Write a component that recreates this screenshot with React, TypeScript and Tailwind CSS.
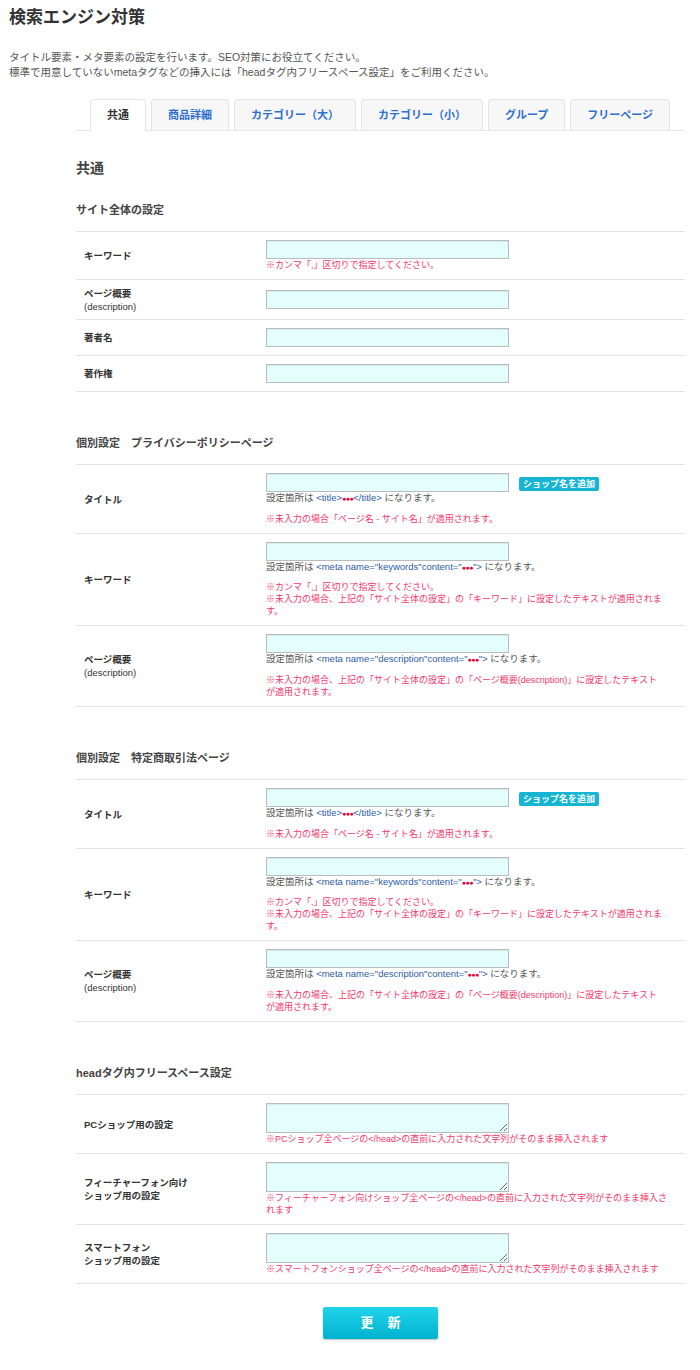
import React from "react";

const tabs = ["共通", "商品詳細", "カテゴリー（大）", "カテゴリー（小）", "グループ", "フリーページ"];

function Input() {
  return (
    <input
      type="text"
      className="block w-[243px] h-[19px] bg-[#e4fdfd] border border-[#b9bcbc] shadow-[inset_0_1px_1px_rgba(0,0,0,0.08)]"
    />
  );
}

function Area() {
  return (
    <textarea className="block w-[243px] h-[30px] bg-[#e4fdfd] border border-[#b9bcbc] shadow-[inset_0_1px_1px_rgba(0,0,0,0.08)]" />
  );
}

function Note({ children }: { children: React.ReactNode }) {
  return <p className="text-[9px] leading-[12px] text-[#f2386b]">{children}</p>;
}

function Code({ children }: { children: React.ReactNode }) {
  return <span className="text-[#2d5ca8]">{children}</span>;
}

function Dots() {
  return <span className="text-[#e8003a] text-[7px] tracking-[-0.5px]">●●●</span>;
}

function Place({ children }: { children: React.ReactNode }) {
  return (
    <p className="text-[9.5px] leading-[12px] text-[#555]">
      設定箇所は {children} になります。
    </p>
  );
}

function Row({ label, sub, children }: { label: React.ReactNode; sub?: string; children: React.ReactNode }) {
  return (
    <div className="flex border-b border-[#e3e3e3]">
      <div className="w-[190px] shrink-0 pl-[8px] flex flex-col justify-center text-[9.5px] leading-[13px] text-[#333]">
        <span className="font-bold">{label}</span>
        {sub && <span>{sub}</span>}
      </div>
      <div className="flex-1 py-[8px] pr-[4px]">{children}</div>
    </div>
  );
}

function Heading({ children, first }: { children: React.ReactNode; first?: boolean }) {
  return (
    <h3
      className={`${first ? "mt-[24px]" : "mt-[43px]"} mb-[13px] text-[11px] leading-[16px] font-bold text-[#444]`}
    >
      {children}
    </h3>
  );
}

function PageSection({ title }: { title: string }) {
  return (
    <>
      <Heading>{title}</Heading>
      <div className="border-t border-[#e3e3e3]">
        <Row label="タイトル">
          <div className="flex items-center gap-[10px]">
            <Input />
            <button className="h-[14px] px-[4px] rounded-[2px] bg-[#15b5d3] text-white text-[9px] leading-[14px] font-bold mt-[3px]">
              ショップ名を追加
            </button>
          </div>
          <Place>
            <Code>
              &lt;title&gt;<Dots />&lt;/title&gt;
            </Code>
          </Place>
          <div className="mt-[8px]">
            <Note>※未入力の場合「ページ名 - サイト名」が適用されます。</Note>
          </div>
        </Row>
        <Row label="キーワード">
          <Input />
          <Place>
            <Code>
              &lt;meta name="keywords"content="<Dots />"&gt;
            </Code>
          </Place>
          <div className="mt-[7px]">
            <Note>※カンマ「,」区切りで指定してください。</Note>
            <Note>
              ※未入力の場合、上記の「サイト全体の設定」の「キーワード」に設定したテキストが適用されま
              <br />
              す。
            </Note>
          </div>
        </Row>
        <Row label="ページ概要" sub="(description)">
          <Input />
          <Place>
            <Code>
              &lt;meta name="description"content="<Dots />"&gt;
            </Code>
          </Place>
          <div className="mt-[8px]">
            <Note>
              ※未入力の場合、上記の「サイト全体の設定」の「ページ概要(description)」に設定したテキスト
              <br />
              が適用されます。
            </Note>
          </div>
        </Row>
      </div>
    </>
  );
}

export default function App() {
  return (
    <div className="min-h-[1370px] bg-white font-['Liberation_Sans','Noto_Sans_CJK_JP',sans-serif] text-[#333]">
      <div className="px-[9px] pt-[8px]">
        <h1 className="text-[17px] leading-[20px] font-bold text-[#333]">検索エンジン対策</h1>
        <div className="mt-[22px] text-[10.5px] leading-[15px] text-[#555]">
          <p>タイトル要素・メタ要素の設定を行います。SEO対策にお役立てください。</p>
          <p>標準で用意していないmetaタグなどの挿入には「headタグ内フリースペース設定」をご利用ください。</p>
        </div>
      </div>

      <div className="ml-[76px] mr-[15px] pb-[32px]">
        {/* tabs */}
        <div className="mt-[19px] flex gap-[5px] pl-[14px] border-b border-[#e6e6e6]">
          {tabs.map((t, i) => (
            <div
              key={t}
              className={`h-[31px] px-[16px] flex items-center rounded-t-[4px] border border-b-0 border-[#e4e4e4] text-[11px] font-bold ${
                i === 0 ? "bg-white text-[#333] -mb-px h-[32px]" : "bg-[#f7f7f7] text-[#2f6fcf]"
              }`}
            >
              {t}
            </div>
          ))}
        </div>

        <h2 className="mt-[27px] text-[14px] leading-[20px] font-bold text-[#444]">共通</h2>

        <Heading first>サイト全体の設定</Heading>
        <div className="border-t border-[#e3e3e3]">
          <Row label="キーワード">
            <Input />
            <Note>※カンマ「,」区切りで指定してください。</Note>
          </Row>
          <Row label="ページ概要" sub="(description)">
            <div className="py-[2px]">
              <Input />
            </div>
          </Row>
          <Row label="著者名">
            <Input />
          </Row>
          <Row label="著作権">
            <Input />
          </Row>
        </div>

        <PageSection title="個別設定　プライバシーポリシーページ" />
        <PageSection title="個別設定　特定商取引法ページ" />

        <Heading>headタグ内フリースペース設定</Heading>
        <div className="border-t border-[#e3e3e3]">
          <Row label="PCショップ用の設定">
            <Area />
            <Note>※PCショップ全ページの&lt;/head&gt;の直前に入力された文字列がそのまま挿入されます</Note>
          </Row>
          <Row
            label={
              <>
                フィーチャーフォン向け
                <br />
                ショップ用の設定
              </>
            }
          >
            <Area />
            <Note>
              ※フィーチャーフォン向けショップ全ページの&lt;/head&gt;の直前に入力された文字列がそのまま挿入さ
              <br />
              れます
            </Note>
          </Row>
          <Row
            label={
              <>
                スマートフォン
                <br />
                ショップ用の設定
              </>
            }
          >
            <Area />
            <Note>※スマートフォンショップ全ページの&lt;/head&gt;の直前に入力された文字列がそのまま挿入されます</Note>
          </Row>
        </div>

        <div className="mt-[23px] flex justify-center">
          <button className="w-[115px] h-[32px] rounded-[2px] bg-gradient-to-b from-[#1fd3ea] to-[#00b2cf] text-white text-[13px] font-bold tracking-[14px] pl-[14px] shadow-[0_1px_2px_rgba(0,0,0,0.25)]">
            更新
          </button>
        </div>
      </div>
    </div>
  );
}
